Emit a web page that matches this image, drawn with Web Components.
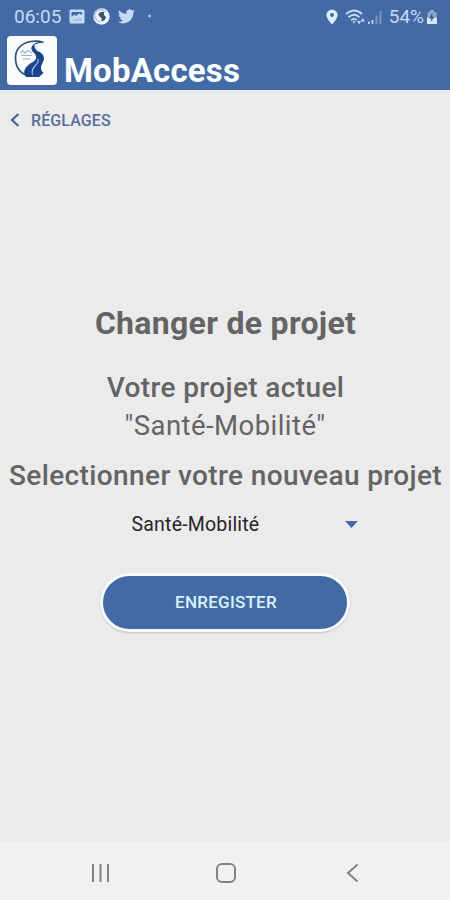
<!DOCTYPE html>
<html lang="fr">
<head>
<meta charset="utf-8">
<title>MobAccess</title>
<style>
html, body {
    margin: 0;
    height: 100%;
}

body {
    font-family: Roboto, "Liberation Sans", sans-serif;
    --main-color: #446aa5;
    --main-txt-color: #646464;
}
</style>
</head>
<body>
<mob-app>
    <status-bar slot="top" time="06:05" battery="54%"></status-bar>
    <app-header slot="top">MobAccess</app-header>
    <back-link slot="top">RÉGLAGES</back-link>
    <project-form heading="Changer de projet" current="&quot;Santé-Mobilité&quot;">
        <project-select>Santé-Mobilité</project-select>
        <round-button>ENREGISTER</round-button>
    </project-form>
    <nav-bar slot="bottom"></nav-bar>
</mob-app>

<script>
(function () {

    // Registers an element whose shadow root is cloned from the given markup
    function define(name, html, setup) {
        const template = document.createElement('template');
        template.innerHTML = html;

        window.customElements.define(name, class extends HTMLElement {
            constructor() {
                super();
                this.attachShadow({ mode: 'open' });
                this.shadowRoot.appendChild(template.content.cloneNode(true));
            }

            connectedCallback() {
                if (setup) {
                    setup(this, this.shadowRoot);
                }
            }
        });
    }

    define('mob-app', `
    <style>
:host {
    display: flex;
    flex-direction: column;
    height: 900px;
    overflow: hidden;
    background: #ebebeb;
}

main {
    flex: 1;
}
</style>
<slot name="top"></slot>
<main><slot></slot></main>
<slot name="bottom"></slot>`);

    define('status-bar', `
    <style>
:host {
    display: flex;
    align-items: center;
    box-sizing: border-box;
    height: 33px;
    padding: 0 11px 0 14px;
    background: var(--main-color);
    color: #c4daf5;
    font-size: 19px;
}

svg {
    display: block;
    flex: none;
}

.left {
    display: flex;
    align-items: center;
    gap: 8px;
}

.right {
    display: flex;
    align-items: center;
    margin-left: auto;
}
</style>
<div class="left">
    <span id="time"></span>
    <svg width="16" height="15" viewBox="0 0 16 15">
        <rect x=".5" y=".5" width="15" height="14" rx="1.5" fill="#c4daf5"/>
        <path d="M2.5 8V3H13V6L10 4.5 7 7 5.5 5.5Z" fill="#446aa5"/>
        <path d="M3 12L6 9.5 8 10.5 10.5 8 13 12Z" fill="#a9c3e6"/>
    </svg>
    <svg width="17" height="17" viewBox="0 0 17 17">
        <circle cx="8.5" cy="8.5" r="8.2" fill="#e7f4ff"/>
        <path d="M12.5 4A6 6 0 1 0 7 13.6" fill="none" stroke="#8da4bd" stroke-width="1"/>
        <path d="M5 6Q8 3 11 4L11 7 13 9Q12 13 8 13.5 10 10 7 9Z" fill="#43536d"/>
    </svg>
    <svg width="17" height="15" viewBox="0 0 24 20">
        <path d="M24 2.4a10 10 0 0 1-2.8.8A5 5 0 0 0 23.3 .5a10 10 0 0 1-3.1 1.2A4.9 4.9 0 0 0 11.8 6.2 14 14 0 0 1 1.7 1a5 5 0 0 0 1.5 6.6 5 5 0 0 1-2.2-.6 5 5 0 0 0 3.9 4.9 5 5 0 0 1-2.2.1 5 5 0 0 0 4.6 3.4A10 10 0 0 1 0 17.5 14 14 0 0 0 21.5 5z" fill="#c4daf5"/>
    </svg>
    <svg width="14" height="15" viewBox="0 0 14 15">
        <circle cx="6.5" cy="7" r="1.3" fill="#c4daf5"/>
    </svg>
</div>
<div class="right">
    <svg width="20" height="16" viewBox="0 0 20 16">
        <path fill-rule="evenodd" d="M6 .5a5.6 5.6 0 0 0-5.6 5.6C.4 10 6 15.5 6 15.5s5.6-5.5 5.6-9.4A5.6 5.6 0 0 0 6 .5zM6 4a2 2 0 1 1 0 4 2 2 0 0 1 0-4z" fill="#dcedff"/>
    </svg>
    <svg width="22" height="16" viewBox="0 0 22 16">
        <g fill="none" stroke="#c4daf5" stroke-width="1.9">
            <path d="M0 5Q8 -2 16 5"/>
            <path d="M2.5 8.3Q8 3.2 13.5 8.3"/>
            <path d="M5.2 11.3Q8 8.5 10.8 11.3"/>
        </g>
        <path d="M6.5 12.3L8 14.8 9.5 12.3Z" fill="#c4daf5"/>
        <path d="M11 12h4l-2 3.5zM14.5 12.5l2.2-3.5 2.2 3.5z" fill="#c4daf5"/>
    </svg>
    <svg width="21" height="16" viewBox="0 0 21 16">
        <path d="M0 12.5h2V15H0zM3.5 11h2v4h-2z" fill="#b4cbea"/>
        <path d="M7.500 6.500h2V15h-2zM11.500 2h2v13h-2z" fill="#7896c6"/>
    </svg>
    <span id="battery"></span>
    <svg width="15" height="16" viewBox="0 0 15 16">
        <path d="M6 1h4v2h2.5v12h-9V3H6z" fill="#8ba6cd"/>
        <path d="M3 8.5h10V15H3z" fill="#d3e5fa"/>
        <path d="M8.5 4L5 9.5H7.5L6.500 13 10.500 7.700H8z" fill="#35516f"/>
    </svg>
</div>`, function (el, root) {
        root.querySelector('#time').innerText = el.getAttribute('time');
        root.querySelector('#battery').innerText = el.getAttribute('battery');
    });

    // White tile with the road emblem
    define('app-logo', `
    <style>
:host {
    display: block;
    box-sizing: border-box;
    width: 50px;
    height: 49px;
    border-radius: 4px;
    background: #fafdfe;
}

svg {
    display: block;
}
</style>
<svg width="50" height="49" viewBox="0 0 50 49">
    <path d="M36.500 6.500Q31 4.500 24 5.500C13 7 8 15 8.500 23 9 32 14 38 22 40" fill="none" stroke="#304f78" stroke-width="1.700"/>
    <path d="M36.500 6.500Q28 7 27.500 10C28 14 37 17 37 22 37 26 34 28 34 32 34 35 36 36 36.500 37L32 41H19C15 36 18 31 24 27 30 24 30 21 28 18 25 15 22 12 27 8Q31 5 36.500 6.500Z" fill="#1d438c"/>
    <path d="M29 8.500Q27.500 12 32 15" fill="none" stroke="#e3ebf6" stroke-width="2.200"/>
    <path d="M25.500 39Q24 34 28 30T31 23" fill="none" stroke="#b2c7ea" stroke-width="1.100"/>
    <path d="M13.500 17L16 14.500 18 17 21 14.500 25 17M14 19.500H25M16 23H23" fill="none" stroke="#a0afc0" stroke-width="1.200"/>
</svg>`);

    define('app-header', `
    <style>
:host {
    display: flex;
    align-items: flex-start;
    box-sizing: border-box;
    height: 57px;
    padding: 3px 7px;
    gap: 7px;
    background: var(--main-color);
    color: #fbffff;
}

h1 {
    margin: 15px 0 0;
    font-size: 33px;
    line-height: 39px;
    font-weight: 700;
    letter-spacing: .2px;
}
</style>
<app-logo></app-logo>
<h1><slot></slot></h1>`);

    define('back-link', `
    <style>
:host {
    display: flex;
    align-items: center;
    height: 60px;
    padding-left: 10px;
    gap: 11px;
    color: #566f9b;
    font-size: 16px;
    font-weight: 500;
    letter-spacing: .1px;
}
</style>
<svg width="10" height="14" viewBox="0 0 10 14">
    <path d="M8.500 1L2 7L8.500 13" fill="none" stroke="#46648f" stroke-width="2.200"/>
</svg>
<a part="a"><slot></slot></a>`);

    define('project-form', `
    <style>
:host {
    display: flex;
    flex-direction: column;
    align-items: center;
    padding-top: 154px;
    color: var(--main-txt-color);
    white-space: nowrap;
}

h2, h3, p {
    margin: 0;
}

h2 {
    padding-left: 1px;
    font-size: 32px;
    line-height: 38px;
    font-weight: 700;
    letter-spacing: .3px;
}

h3 {
    padding-left: 1px;
    font-size: 28px;
    line-height: 32px;
    font-weight: 500;
    letter-spacing: .38px;
}

.now {
    margin-top: 30px;
}

p {
    margin-top: 6px;
    font-size: 27.5px;
    line-height: 32px;
    letter-spacing: .45px;
}

.next {
    margin-top: 18px;
}
</style>
<h2></h2>
<h3 class="now">Votre projet actuel</h3>
<p></p>
<h3 class="next">Selectionner votre nouveau projet</h3>
<slot></slot>`, function (el, root) {
        root.querySelector('h2').innerText = el.getAttribute('heading');
        root.querySelector('p').innerText = el.getAttribute('current');
    });

    define('project-select', `
    <style>
:host {
    display: flex;
    align-items: center;
    justify-content: space-between;
    width: 226px;
    height: 24px;
    margin: 20px 0 0 39px;
    box-sizing: border-box;
    color: #262626;
    font-size: 19.5px;
    letter-spacing: .2px;
}
</style>
<span><slot></slot></span>
<svg width="13" height="7" viewBox="0 0 13 7">
    <path d="M0 0H13L6.5 7Z" fill="#4468a8"/>
</svg>`);

    define('round-button', `
    <style>
:host {
    display: block;
    margin-top: 37px;
}

button {
    display: flex;
    align-items: center;
    justify-content: center;
    box-sizing: border-box;
    width: 250px;
    height: 59px;
    padding: 0 0 1px 2px;
    border: 3px solid #f8fbfd;
    border-radius: 30px;
    background: var(--main-color);
    box-shadow: 0 1px 2px rgba(0, 0, 0, .18);
    color: #d9f2ff;
    font: 500 17px Roboto, "Liberation Sans", sans-serif;
    letter-spacing: .25px;
}
</style>
<button><slot></slot></button>`);

    // Android buttons: recents, home, back
    define('nav-bar', `
    <style>
:host {
    display: flex;
    align-items: center;
    box-sizing: border-box;
    height: 58px;
    padding: 3px 0 0 90px;
    gap: 103px;
    background: #f1f1f1;
}

svg {
    display: block;
    fill: none;
    stroke: #828282;
    stroke-width: 2;
}
</style>
<svg width="22" height="22" viewBox="0 0 22 22">
    <path d="M3 2V20M10.500 2V20M18 2V20"/>
</svg>
<svg width="22" height="22" viewBox="0 0 22 22">
    <rect x="2" y="2" width="18" height="18" rx="5"/>
</svg>
<svg width="22" height="22" viewBox="0 0 22 22">
    <path d="M17.500 2.500L8 11L17.500 19.500"/>
</svg>`);
})();
</script>
</body>
</html>
